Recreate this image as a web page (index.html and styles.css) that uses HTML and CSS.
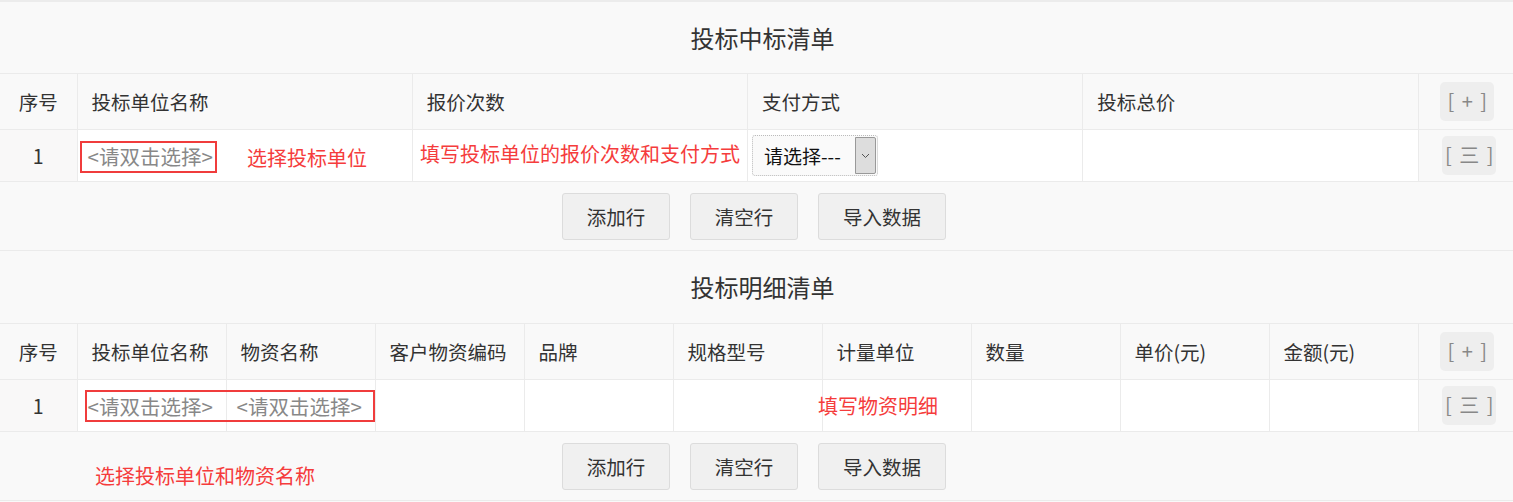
FILE: index.html
```html
<!DOCTYPE html>
<html lang="zh-CN">
<head>
    <meta charset="UTF-8">
    <title>投标清单</title>
    <link rel="stylesheet" href="styles.css">
</head>
<body>
    <div class="page">
        <div class="title first">投标中标清单</div>
        <table class="grid">
            <colgroup>
                <col class="c-no">
                <col><col><col><col>
                <col class="c-op">
            </colgroup>
            <thead>
                <tr>
                    <th class="no">序号</th>
                    <th>投标单位名称</th>
                    <th>报价次数</th>
                    <th>支付方式</th>
                    <th>投标总价</th>
                    <th class="op"><span class="op-btn">[ + ]</span></th>
                </tr>
            </thead>
            <tbody>
                <tr>
                    <td class="no">1</td>
                    <td><span class="pick">&lt;请双击选择&gt;</span></td>
                    <td></td>
                    <td>
                        <div class="select">
                            <span class="select-text">请选择---</span>
                            <span class="select-arrow">
                                <svg width="9" height="6" viewBox="0 0 9 6"><path d="M1 1 L4.5 4.5 L8 1" fill="none" stroke="#555" stroke-width="1"/></svg>
                            </span>
                        </div>
                    </td>
                    <td></td>
                    <td class="op"><span class="op-btn">[ 三 ]</span></td>
                </tr>
            </tbody>
        </table>
        <div class="toolbar">
            <button>添加行</button>
            <button>清空行</button>
            <button class="wide">导入数据</button>
        </div>

        <div class="title">投标明细清单</div>
        <table class="grid">
            <colgroup>
                <col class="c-no">
                <col><col><col><col><col><col><col><col><col>
                <col class="c-op">
            </colgroup>
            <thead>
                <tr>
                    <th class="no">序号</th>
                    <th>投标单位名称</th>
                    <th>物资名称</th>
                    <th>客户物资编码</th>
                    <th>品牌</th>
                    <th>规格型号</th>
                    <th>计量单位</th>
                    <th>数量</th>
                    <th>单价(元)</th>
                    <th>金额(元)</th>
                    <th class="op"><span class="op-btn">[ + ]</span></th>
                </tr>
            </thead>
            <tbody>
                <tr>
                    <td class="no">1</td>
                    <td><span class="pick">&lt;请双击选择&gt;</span></td>
                    <td><span class="pick">&lt;请双击选择&gt;</span></td>
                    <td></td><td></td><td></td><td></td><td></td><td></td><td></td>
                    <td class="op"><span class="op-btn">[ 三 ]</span></td>
                </tr>
            </tbody>
        </table>
        <div class="toolbar">
            <button>添加行</button>
            <button>清空行</button>
            <button class="wide">导入数据</button>
        </div>

        <!-- annotations drawn over the form -->
        <div class="mark box1"></div>
        <div class="mark box2"></div>
        <div class="note n1">选择投标单位</div>
        <div class="note n2">填写投标单位的报价次数和支付方式</div>
        <div class="note n3">填写物资明细</div>
        <div class="note n4">选择投标单位和物资名称</div>
    </div>
</body>
</html>
```

FILE: styles.css
```css
body {
    margin: 0;
    padding: 0;
    background-color: #f9f9f9;
    font-family: "Noto Sans CJK SC", "Microsoft YaHei", sans-serif;
    color: #333;
}
.page {
    position: relative;
    width: 1513px;
}
.title {
    height: 72px;
    line-height: 72px;
    padding-left: 12px;
    text-align: center;
    font-size: 24px;
}
.title.first {
    height: 71px;
    line-height: 71px;
    border-top: 2px solid #ececec;
}
.grid {
    width: 100%;
    border-collapse: collapse;
    table-layout: fixed;
    font-size: 19.5px;
}
.grid .c-no {
    width: 77px;
}
.grid .c-op {
    width: 95px;
}
.grid th,
.grid td {
    border: 1px solid #ebebeb;
    padding: 0 0 0 14px;
    text-align: left;
    font-weight: normal;
    white-space: nowrap;
    overflow: hidden;
}
.grid th:first-child,
.grid td:first-child {
    border-left: none;
}
.grid th:last-child,
.grid td:last-child {
    border-right: none;
}
.grid th {
    height: 55px;
    background-color: #f9f9f9;
}
.grid td {
    height: 51px;
    background-color: #fff;
}
.grid .no {
    padding: 0;
    text-align: center;
}
.grid td.no {
    background-color: #f9f8f8;
}
.grid .op {
    padding: 0;
    text-align: center;
}
.grid td.op {
    background-color: #f9f9f9;
}
.op-btn {
    display: inline-block;
    width: 54px;
    height: 39px;
    line-height: 38px;
    border-radius: 5px;
    background-color: #eeeeee;
    color: #888;
    font-size: 20px;
    word-spacing: 3px;
    text-align: center;
    margin-left: 3px;
}
td .op-btn {
    margin-left: 7px;
}
.grid td .pick {
    color: #888;
    font-size: 20.5px;
    margin-left: -4px;
}
.select {
    display: flex;
    align-items: stretch;
    width: 124px;
    height: 39px;
    margin-left: -10px;
    border: 1px dotted #bbb;
    border-radius: 3px;
    background-color: #fafafa;
    box-sizing: content-box;
}
.select-text {
    flex: 1;
    line-height: 39px;
    padding-left: 11px;
    color: #111;
    font-size: 19px;
}
.select-arrow {
    width: 19px;
    margin: 1px 1px 1px 0;
    border: 1px solid #999;
    border-radius: 0 2px 2px 0;
    background-color: #ddd;
    display: flex;
    align-items: center;
    justify-content: center;
}
.toolbar {
    display: flex;
    justify-content: center;
    gap: 20px;
    padding: 11px 5px 10px 0;
    border-bottom: 1px solid #ebebeb;
}
.toolbar button {
    width: 108px;
    height: 47px;
    font-family: inherit;
    font-size: 19.5px;
    color: #333;
    background-color: #f0f0f0;
    border: 1px solid #dcdcdc;
    border-radius: 3px;
}
.toolbar button.wide {
    width: 128px;
}
.mark {
    position: absolute;
    border: 2px solid #f03c3c;
}
.box1 {
    left: 80px;
    top: 141px;
    width: 133px;
    height: 28px;
}
.box2 {
    left: 85px;
    top: 390px;
    width: 286px;
    height: 28px;
}
.note {
    position: absolute;
    color: #f53c3c;
    font-size: 20px;
    line-height: 24px;
    white-space: nowrap;
}
.n1 { left: 247px; top: 146px; }
.n2 { left: 420px; top: 142px; }
.n3 { left: 818px; top: 394px; }
.n4 { left: 95px; top: 464px; }
```
